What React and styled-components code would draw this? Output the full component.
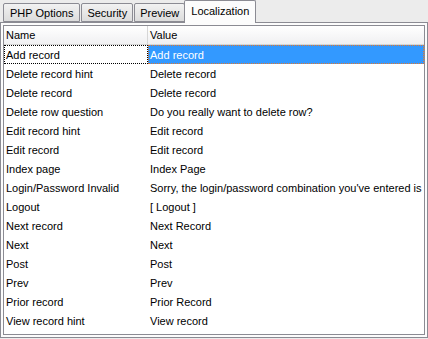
import React from 'react';
import styled, { createGlobalStyle } from 'styled-components';

const rows = [
  ['Add record', 'Add record'],
  ['Delete record hint', 'Delete record'],
  ['Delete record', 'Delete record'],
  ['Delete row question', 'Do you really want to delete row?'],
  ['Edit record hint', 'Edit record'],
  ['Edit record', 'Edit record'],
  ['Index page', 'Index Page'],
  ['Login/Password Invalid', "Sorry, the login/password combination you've entered is"],
  ['Logout', '[ Logout ]'],
  ['Next record', 'Next Record'],
  ['Next', 'Next'],
  ['Post', 'Post'],
  ['Prev', 'Prev'],
  ['Prior record', 'Prior Record'],
  ['View record hint', 'View record'],
];

const tabs = ['PHP Options', 'Security', 'Preview', 'Localization'];

const App = () =>
  <Window>
    <GlobalStyle />
    <TabStrip>
      {tabs.map(t =>
        <Tab key={t} active={t === 'Localization'}>{t}</Tab>
      )}
    </TabStrip>
    <Panel>
      <Grid>
        <HeaderRow>
          <HeaderCell>Name</HeaderCell>
          <HeaderCell>Value</HeaderCell>
        </HeaderRow>
        {rows.map(([name, value], i) =>
          <Row key={name + i}>
            <NameCell selected={i === 0}>{name}</NameCell>
            <ValueCell selected={i === 0}>{value}</ValueCell>
          </Row>
        )}
      </Grid>
    </Panel>
  </Window>;

const GlobalStyle = createGlobalStyle`
  body {
    margin: 0;
    background: #ececec;
    font-family: "Liberation Sans", Arial, sans-serif;
    font-size: 11px;
  }
`;

const Window = styled.div`
  display: flex;
  flex-direction: column;
  width: 428px;
  height: 339px;
  background: #ececec;
`;

const TabStrip = styled.div`
  display: flex;
  align-items: flex-end;
  height: 22px;
  padding-left: 3px;
  position: relative;
  z-index: 1;
`;

const Tab = styled.div`
  display: flex;
  align-items: center;
  height: ${p => (p.active ? '23px' : '19px')};
  margin-bottom: ${p => (p.active ? '-1px' : '0')};
  margin-left: ${p => (p.active ? '-1px' : '1px')};
  padding: ${p => (p.active ? '0 6px 3px 6px' : '0 5px')};
  border: 1px solid #8b8b93;
  border-bottom: ${p => (p.active ? 'none' : '1px solid #8b8b93')};
  border-radius: 2px 2px 0 0;
  background: ${p => (p.active ? '#fcfcfc' : 'linear-gradient(#f2f2f2, #dcdcdc)')};
  color: #000;
  white-space: nowrap;
  box-sizing: border-box;
  &:first-child {
    margin-left: 0;
    padding: 0 6px;
  }
`;

const Panel = styled.div`
  display: flex;
  flex: 1;
  margin-bottom: 1px;
  padding: 2px;
  border: 1px solid #8b8b93;
  background: #fcfcfc;
`;

const Grid = styled.div`
  flex: 1;
  border: 1px solid #8b8b93;
  background: #fff;
  overflow: hidden;
`;

const HeaderRow = styled.div`
  display: grid;
  grid-template-columns: 144px 1fr;
  height: 18px;
  border-bottom: 1px solid #d6d6d6;
  background: linear-gradient(#ffffff, #f0f0f2);
`;

const HeaderCell = styled.div`
  display: flex;
  align-items: center;
  padding-left: 2px;
  color: #000;
  &:first-child {
    border-right: 1px solid #d6d6d6;
  }
`;

const Row = styled.div`
  display: grid;
  grid-template-columns: 144px 1fr;
  height: 19px;
`;

const NameCell = styled.div`
  display: flex;
  align-items: center;
  padding-left: 1px;
  border: 1px dotted ${p => (p.selected ? '#000' : 'transparent')};
  color: #000;
  white-space: nowrap;
  overflow: hidden;
`;

const ValueCell = styled.div`
  display: flex;
  align-items: center;
  padding-left: 1px;
  border: 1px dotted ${p => (p.selected ? '#e07830' : 'transparent')};
  background: ${p => (p.selected ? '#3399ff' : 'transparent')};
  color: ${p => (p.selected ? '#fff' : '#000')};
  white-space: nowrap;
  overflow: hidden;
`;

export default App;
